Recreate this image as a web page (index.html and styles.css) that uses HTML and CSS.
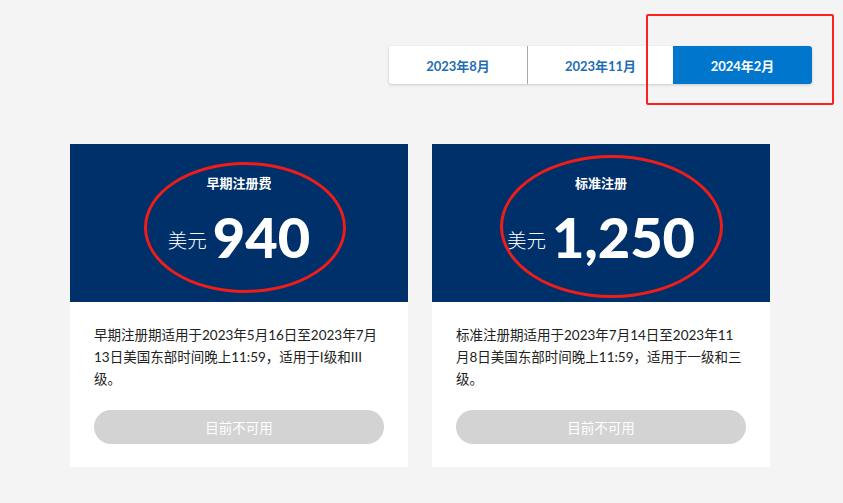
FILE: index.html
```html
<!DOCTYPE html>
<html lang="zh">
<head>
<meta charset="utf-8">
<link rel="stylesheet" href="styles.css">
</head>
<body>
<div class="page">
  <div class="tabs-row">
    <div class="tabs">
      <div class="tab">2023年8月</div>
      <div class="tab">2023年11月</div>
      <div class="tab active">2024年2月</div>
    </div>
  </div>
  <div class="cards">
    <div class="card">
      <div class="card-head">
        <div class="title">早期注册费</div>
        <div class="price"><span class="cur">美元</span><span class="amt">940</span></div>
        <div class="mark mark-1"></div>
      </div>
      <div class="card-body">
        <p class="desc">早期注册期适用于2023年5月16日至2023年7月13日美国东部时间晚上11:59，适用于I级和III级。</p>
        <div class="btn">目前不可用</div>
      </div>
    </div>
    <div class="card">
      <div class="card-head">
        <div class="title">标准注册</div>
        <div class="price"><span class="cur">美元</span><span class="amt">1,250</span></div>
        <div class="mark mark-2"></div>
      </div>
      <div class="card-body">
        <p class="desc">标准注册期适用于2023年7月14日至2023年11月8日美国东部时间晚上11:59，适用于一级和三级。</p>
        <div class="btn">目前不可用</div>
      </div>
    </div>
  </div>
  <div class="box-mark"></div>
</div>
</body>
</html>
```

FILE: styles.css
```css
html, body {
  margin: 0;
  padding: 0;
  background: #f4f4f4;
}
body {
  font-family: "Lato", "Noto Sans CJK SC", sans-serif;
  width: 843px;
  height: 503px;
  overflow: hidden;
}
.page {
  position: relative;
  height: 503px;
}
.tabs-row {
  display: flex;
  justify-content: flex-end;
  padding: 46px 31px 0 0;
}
.tabs {
  display: flex;
  background: #fff;
  border-radius: 3px;
  box-shadow: 0 1px 3px rgba(0,0,0,0.18);
  height: 38px;
}
.tab {
  display: flex;
  align-items: center;
  justify-content: center;
  font-size: 13px;
  font-weight: 700;
  color: #1f6db5;
}
.tab:nth-child(1) { width: 138px; border-right: 1px solid #a9a9a9; }
.tab:nth-child(2) { width: 145px; }
.tab.active {
  width: 139px;
  background: #0077cc;
  color: #fff;
  border-radius: 0 3px 3px 0;
}
.cards {
  display: flex;
  gap: 24px;
  padding: 60px 0 0 70px;
}
.card {
  width: 338px;
  background: #fff;
}
.card-head {
  position: relative;
  height: 158px;
  background: #00306a;
  color: #fff;
  display: flex;
  flex-direction: column;
  align-items: center;
  padding-top: 31px;
  box-sizing: border-box;
}
.title {
  font-size: 13px;
  font-weight: 700;
  line-height: 16px;
}
.price {
  display: flex;
  align-items: center;
  gap: 6px;
  margin-top: 14px;
}
.cur {
  font-size: 19.5px;
  font-weight: 300;
  margin-top: 4px;
}
.amt {
  font-size: 56px;
  font-weight: 900;
  line-height: 64px;
}
.mark {
  position: absolute;
  border: 3px solid #ee1d1a;
  border-radius: 50%;
  box-sizing: border-box;
}
.mark-1 { left: 74px; top: 18px; width: 202px; height: 131px; }
.mark-2 { left: 68px; top: 11px; width: 223px; height: 143px; }
.card-body {
  padding: 22px 26px 23px 24px;
}
.desc {
  margin: 0;
  font-size: 13.5px;
  line-height: 22px;
  color: #222;
}
.btn {
  margin-top: 20px;
  height: 34px;
  border-radius: 17px;
  background: #d3d3d3;
  color: #fff;
  font-size: 13.5px;
  display: flex;
  align-items: center;
  justify-content: center;
  width: 290px;
}
.box-mark {
  position: absolute;
  left: 646px;
  top: 14px;
  width: 188px;
  height: 91px;
  border: 2px solid #ff1f1f;
  border-radius: 2px;
  box-sizing: border-box;
}
```
